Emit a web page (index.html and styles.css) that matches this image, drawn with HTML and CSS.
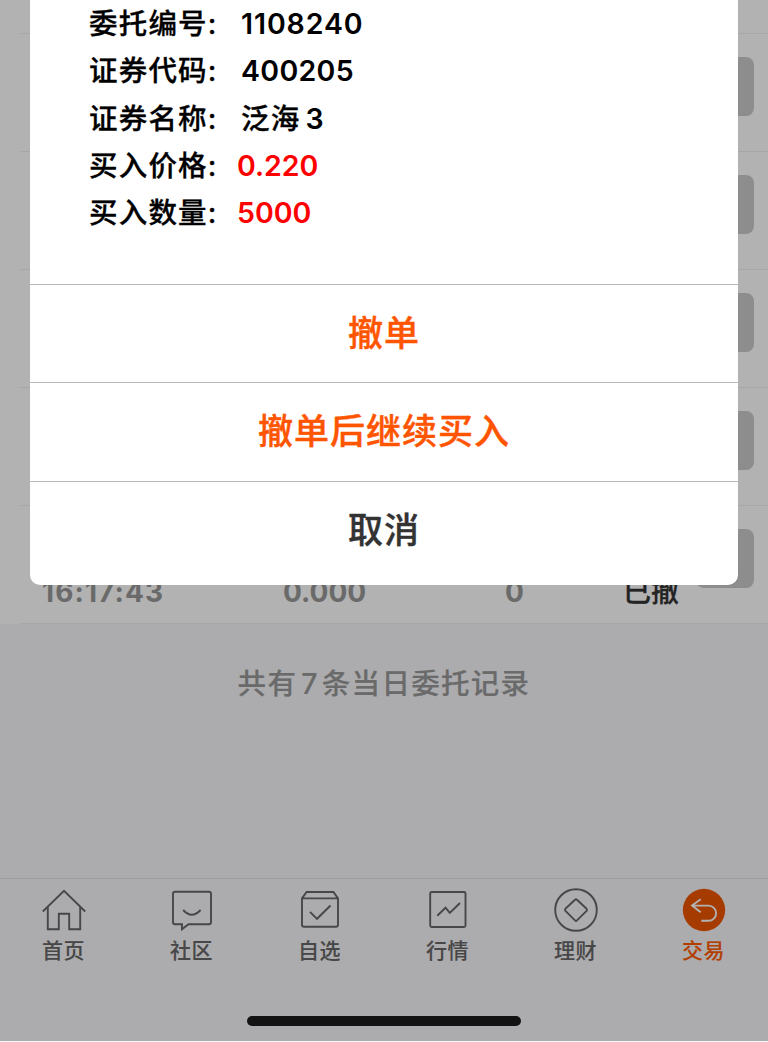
FILE: index.html
```html
<!DOCTYPE html>
<html lang="zh-CN">
<head>
  <meta charset="UTF-8">
  <meta name="viewport" content="width=device-width, initial-scale=1.0">
  <title>当日委托</title>
  <link rel="stylesheet" href="styles.css">
</head>
<body>

  <div class="page">
    <!-- 委托列表 -->
    <div class="order-list">
      <div class="order-row first"></div>
      <div class="order-row"><span class="order-btn"></span></div>
      <div class="order-row"><span class="order-btn"></span></div>
      <div class="order-row"><span class="order-btn"></span></div>
      <div class="order-row"><span class="order-btn"></span></div>
      <div class="order-row last">
        <div class="order-cells">
          <span class="time">16:17:43</span>
          <span>0.000</span>
          <span>0</span>
          <span class="status">已撤</span>
        </div>
        <span class="order-btn"></span>
      </div>
    </div>

    <p class="summary">共有<span class="count">7</span>条当日委托记录</p>

    <!-- 底部导航 -->
    <nav class="tabbar">
      <a class="tab">
        <svg viewBox="0 0 48 48"><path d="M2.8 25.5 24 4.8l21.2 20.7M7.8 21v22.3h11V27.7h10.4v15.6h11V21"/></svg>
        <span>首页</span>
      </a>
      <a class="tab">
        <svg viewBox="0 0 48 48"><path d="M7 5.8h34q2 0 2 2v28.4q0 2-2 2H20.5L14 43.3v-5.1H7q-2 0-2-2V7.8q0-2 2-2zM15.2 24q8.6 9.5 17.4 0"/></svg>
        <span>社区</span>
      </a>
      <a class="tab">
        <svg viewBox="0 0 48 48"><path d="M6 12.4 10.6 6h26.8l4.6 6.4v26.4q0 2-2 2H8q-2 0-2-2zM6 12.4h36M14 25.8l7 7L34.5 19.5"/></svg>
        <span>自选</span>
      </a>
      <a class="tab">
        <svg viewBox="0 0 48 48"><rect x="6.2" y="6" width="35.3" height="35" rx="1.5"/><path d="m13.3 29.7 8.2-8 4.3 5.2L36 17"/></svg>
        <span>行情</span>
      </a>
      <a class="tab">
        <svg viewBox="0 0 48 48"><circle cx="24" cy="24" r="20.8"/><path d="m23 13.8-9.6 9q-1 1 0 2l9.6 9.6q1 1 2 0l9.6-9.6q1-1 0-2l-9.6-9q-1-1-2 0z"/></svg>
        <span>理财</span>
      </a>
      <a class="tab active">
        <svg viewBox="0 0 48 48"><circle class="disc" cx="24" cy="24" r="21.2"/><path class="arrow" d="M20.7 13.3 12 19.6l8.7 6.7M12 19.6h16.5a7.6 7.6 0 0 1 0 15.2h-7.2"/></svg>
        <span>交易</span>
      </a>
    </nav>
  </div>

  <div class="mask"></div>

  <!-- 撤单弹窗 -->
  <div class="dialog">
    <div class="detail">
      <div class="line"><span class="label">委托编号:</span><span class="value id">1108240</span></div>
      <div class="line"><span class="label">证券代码:</span><span class="value">400205</span></div>
      <div class="line"><span class="label">证券名称:</span><span class="value"><span class="name">泛海</span><span class="num">3</span></span></div>
      <div class="line"><span class="label">买入价格:</span><span class="value red">0.220</span></div>
      <div class="line"><span class="label">买入数量:</span><span class="value red">5000</span></div>
    </div>
    <button class="action">撤单</button>
    <button class="action">撤单后继续买入</button>
    <button class="action cancel">取消</button>
  </div>

  <div class="home-indicator"></div>

</body>
</html>
```

FILE: styles.css
```css
* {
  box-sizing: border-box;
}

body {
  margin: 0;
  height: 1042px;
  position: relative;
  overflow: hidden;
  font-family: Inter, "Noto Sans CJK SC", sans-serif;
  background-color: #f7f7fa;
}

.page {
  height: 1042px;
  display: flex;
  flex-direction: column;
}

.order-list {
  background-color: #fff;
}

.order-row {
  height: 118px;
  margin-left: 20px;
  padding: 23px 14px 0 0;
  border-bottom: 1px solid #f0f0f0;
  display: flex;
  justify-content: flex-end;
}

.order-row.first {
  height: 34px;
}

.order-row.last {
  justify-content: space-between;
}

.order-btn {
  width: 58px;
  height: 59px;
  border-radius: 8px;
  background-color: #cbcbcb;
}

.order-cells {
  display: grid;
  grid-template-columns: 241px 222px 118px auto;
  padding: 45px 0 0 22px;
  font-size: 28px;
  font-weight: 700;
  line-height: 36px;
  color: #999;
}

.order-cells .time {
  letter-spacing: 1.1px;
}

.order-cells .status {
  font-weight: 500;
  -webkit-text-stroke: 0.3px;
  color: #333;
}

.summary {
  margin: 0;
  padding-top: 39px;
  text-align: center;
  font-size: 28.5px;
  font-weight: 500;
  line-height: 42px;
  letter-spacing: 1.3px;
  -webkit-text-stroke: 0.2px;
  color: #999;
}

.summary .count {
  margin: 0 3px 0 4px;
}

.tabbar {
  height: 164px;
  margin-top: auto;
  padding-top: 7px;
  border-top: 1px solid #e2e2ee;
  display: flex;
}

.tab {
  flex: 1;
  display: flex;
  flex-direction: column;
  align-items: center;
  font-size: 21px;
  font-weight: 500;
  line-height: 34px;
  letter-spacing: 0.5px;
  -webkit-text-stroke: 0.1px;
  color: #666;
}

.tab span {
  margin-left: -1px;
}

.tab svg {
  width: 48px;
  height: 48px;
  fill: none;
  stroke: #666;
  stroke-width: 1.9;
}

.tab.active {
  color: #ff5a00;
}

.tab .disc {
  fill: #ee5500;
  stroke: none;
}

.tab .arrow {
  stroke: #fff;
}

.mask {
  position: absolute;
  top: 0;
  left: 0;
  right: 0;
  bottom: 1px;
  background-color: rgba(0, 0, 0, 0.3);
}

.dialog {
  position: absolute;
  top: 0;
  left: 30px;
  width: 708px;
  height: 585px;
  border-radius: 0 0 10px 10px;
  background-color: #fff;
}

.detail {
  height: 284px;
  padding-left: 59px;
  font-size: 28.5px;
  font-weight: 600;
  letter-spacing: 0.3px;
  color: #000;
}

.line {
  display: flex;
  height: 47.3px;
  line-height: 47.3px;
}

.label,
.name {
  font-weight: 500;
  letter-spacing: 1.2px;
  -webkit-text-stroke: 0.3px;
}

.label {
  width: 152px;
}

.value.id {
  letter-spacing: 0.9px;
}

.value.red {
  margin-left: -4px;
  letter-spacing: 0;
  color: #f00;
}

.num {
  margin-left: 5px;
}

.action {
  display: block;
  width: 100%;
  height: 98.3px;
  padding: 0 0 6px;
  border: none;
  border-top: 1px solid #b8b8b8;
  background: none;
  font-family: inherit;
  font-size: 35px;
  font-weight: 500;
  letter-spacing: 1px;
  -webkit-text-stroke: 0.4px;
  color: #ff5500;
}

.action.cancel {
  color: #333;
}

.home-indicator {
  position: absolute;
  left: 247px;
  top: 1016px;
  width: 274px;
  height: 10px;
  border-radius: 5px;
  background-color: #131313;
}
```
